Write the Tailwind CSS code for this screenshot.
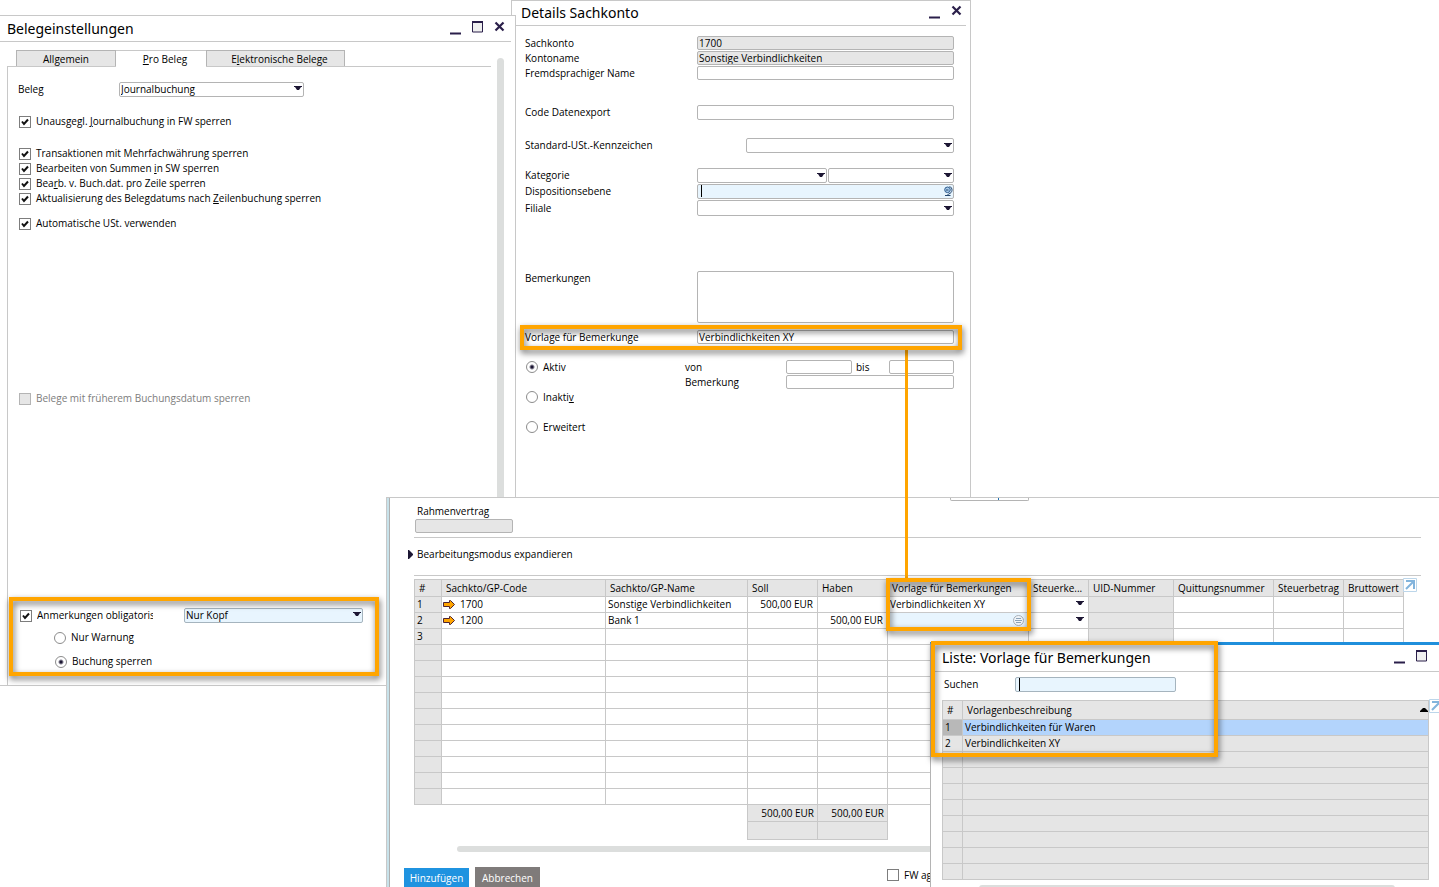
<!DOCTYPE html>
<html lang="de">
  <head>
    <meta charset="UTF-8" />
    <meta name="viewport" content="width=device-width, initial-scale=1.0" />
    <title>Belegeinstellungen</title>
    <script src="https://cdn.jsdelivr.net/npm/@tailwindcss/browser@4"></script>
  </head>
  <body class="relative h-screen min-h-[887px] overflow-hidden bg-white font-['Open_Sans',sans-serif] text-[10px] leading-[14px] text-black">
    <!-- Shared icons -->
    <svg class="hidden">
      <symbol id="i-down" viewBox="0 0 8 4"><path d="M0 0h8v1H7L5 4H3L1 1H0z" fill="#1c1633" /></symbol>
      <symbol id="i-check" viewBox="0 0 12 12"><path d="M3 5.500L5 8 9 3.500" fill="none" stroke="#111" stroke-width="2" /></symbol>
      <symbol id="i-min" viewBox="0 0 12 12"><path d="M0 10.500h11" stroke="#2a1f4a" stroke-width="2" /></symbol>
      <symbol id="i-max" viewBox="0 0 12 12"><path d="M.5 1h10v10H.5z" fill="#f0f0f0" stroke="#2a1f4a" /><path d="M0 1h11" stroke="#2a1f4a" stroke-width="2" /></symbol>
      <symbol id="i-close" viewBox="0 0 12 12"><path d="M1.500 1.500l8 8M9.500 1.500l-8 8" stroke="#2a1f4a" stroke-width="2.200" /></symbol>
      <symbol id="i-arrow" viewBox="0 0 12 9"><path d="M.5 2.500h6v-2h1l4 4-4 4h-1v-2h-6z" fill="#ffa500" stroke="#4a2436" /></symbol>
      <symbol id="i-expand" viewBox="0 0 14 14"><path d="M.5.5h13v13H.5z" fill="#fff" stroke="#bcd6ea" /><path d="M3 3h8v8M11 3l-8 8" fill="none" stroke="#82b4dc" stroke-width="2" /></symbol>
    </svg>

    <!-- Details Sachkonto -->
    <section class="absolute top-0 left-[511px] h-[498px] w-[460px] border border-[#c8c8c8] bg-white">
      <header class="mr-1 flex h-[25px] items-center border-b border-[#c8c8c8] pl-[9px]">
        <h2 class="flex-1 font-['Noto_Sans'] text-[14px] leading-[20px]">Details Sachkonto</h2>
        <button class="mr-[10px]" aria-label="Minimieren"><svg class="size-3"><use href="#i-min" /></svg></button>
        <button class="mr-[3px] mb-1" aria-label="Schließen"><svg class="size-3"><use href="#i-close" /></svg></button>
      </header>
      <form class="flex flex-col pt-[10px] pr-4 pl-[13px]">
        <div class="mb-px flex"><label for="konto" class="w-[172px]">Sachkonto</label><input id="konto" value="1700" readonly class="h-[14px] min-w-0 flex-1 rounded-[2px] border border-[#b4b4b4] bg-[#e6e6e6] px-px" /></div>
        <div class="mb-px flex"><label for="kname" class="w-[172px]">Kontoname</label><input id="kname" value="Sonstige Verbindlichkeiten" readonly class="h-[14px] min-w-0 flex-1 rounded-[2px] border border-[#b4b4b4] bg-[#e6e6e6] px-px" /></div>
        <div class="mb-[25px] flex"><label for="fname" class="w-[172px]">Fremdsprachiger Name</label><input id="fname" class="h-[14px] min-w-0 flex-1 rounded-[2px] border border-[#b4b4b4] px-px" /></div>
        <div class="mb-[18px] flex"><label for="code" class="w-[172px]">Code Datenexport</label><input id="code" class="h-[15px] min-w-0 flex-1 rounded-[2px] border border-[#b4b4b4] px-px" /></div>
        <div class="mb-[15px] flex"><label for="ust" class="w-[221px]">Standard-USt.-Kennzeichen</label>
          <span class="relative flex flex-1"><select id="ust" class="h-[15px] w-full appearance-none rounded-[2px] border border-[#b4b4b4]"><option></option></select><svg class="pointer-events-none absolute top-[5px] right-[2px] h-1 w-2"><use href="#i-down" /></svg></span>
        </div>
        <div class="mb-px flex"><label for="kat" class="w-[172px]">Kategorie</label>
          <span class="relative mr-px flex w-[130px]"><select id="kat" class="h-[15px] w-full appearance-none rounded-[2px] border border-[#b4b4b4]"><option></option></select><svg class="pointer-events-none absolute top-[5px] right-[2px] h-1 w-2"><use href="#i-down" /></svg></span>
          <span class="relative flex flex-1"><select aria-label="Unterkategorie" class="h-[15px] w-full appearance-none rounded-[2px] border border-[#b4b4b4]"><option></option></select><svg class="pointer-events-none absolute top-[5px] right-[2px] h-1 w-2"><use href="#i-down" /></svg></span>
        </div>
        <div class="mb-px flex"><label for="dispo" class="w-[172px]">Dispositionsebene</label>
          <span class="relative flex flex-1"><input id="dispo" class="h-[15px] w-full rounded-[2px] border border-[#b4b4b4] bg-[#e8f5fe]" /><span class="absolute top-px left-1 h-3 w-px bg-black"></span>
            <svg class="absolute top-[2px] right-px size-[10px]" viewBox="0 0 10 10" fill="none"><circle cx="4.500" cy="3.800" r="2.800" fill="#a9cbea" stroke="#2d5a8c" /><path d="M6.500.5c3.500 1 3.500 6.500-1 7.500M5 8v1.500M2 9.500h5.500M3 4h2.500" stroke="#24466f" /></svg></span>
        </div>
        <div class="mb-[55px] flex"><label for="filiale" class="w-[172px] pt-px">Filiale</label>
          <span class="relative flex flex-1"><select id="filiale" class="h-4 w-full appearance-none rounded-[2px] border border-[#b4b4b4]"><option></option></select><svg class="pointer-events-none absolute top-[6px] right-[2px] h-1 w-2"><use href="#i-down" /></svg></span>
        </div>
        <div class="mb-[7px] flex"><label for="bem" class="w-[172px]">Bemerkungen</label><textarea id="bem" class="h-[52px] min-w-0 flex-1 resize-none rounded-[2px] border border-[#b4b4b4]"></textarea></div>
        <div class="mb-4 flex"><label for="vorl" class="w-[172px]">Vorlage für Bemerkunge</label><input id="vorl" value="Verbindlichkeiten XY" class="h-[14px] min-w-0 flex-1 rounded-[2px] border border-[#b4b4b4] px-px" /></div>
        <div class="flex">
          <div class="flex w-40 shrink-0 flex-col gap-4">
            <label class="flex items-center gap-1"><input type="radio" name="status" checked class="mx-px size-3 appearance-none rounded-full border border-[#8c8c8c] checked:bg-[radial-gradient(circle,#1c1633_1px,transparent_3px)]" />Aktiv</label>
            <label class="flex items-center gap-1"><input type="radio" name="status" class="mx-px size-3 appearance-none rounded-full border border-[#8c8c8c]" /><span>Inakti<u>v</u></span></label>
            <label class="flex items-center gap-1"><input type="radio" name="status" class="mx-px size-3 appearance-none rounded-full border border-[#8c8c8c]" />Erweitert</label>
          </div>
          <div class="flex min-w-0 flex-1 flex-col gap-px">
            <div class="flex"><label for="von" class="w-[101px] shrink-0">von</label><input id="von" class="h-[14px] w-[66px] rounded-[2px] border border-[#b4b4b4]" /><label for="bis" class="w-[37px] shrink-0 pl-1">bis</label><input id="bis" class="h-[14px] min-w-0 flex-1 rounded-[2px] border border-[#b4b4b4]" /></div>
            <div class="flex"><label for="bemk" class="w-[101px] shrink-0">Bemerkung</label><input id="bemk" class="h-[14px] min-w-0 flex-1 rounded-[2px] border border-[#b4b4b4]" /></div>
          </div>
        </div>
      </form>
    </section>

    <!-- Belegeinstellungen -->
    <section class="absolute top-[15px] left-0 flex h-[671px] w-[516px] flex-col border-y border-r border-[#c8c8c8] bg-white">
      <header class="mr-1 flex h-[26px] shrink-0 items-center border-b border-[#c8c8c8] pl-[7px]">
        <h2 class="flex-1 font-['Noto_Sans'] text-[14px] leading-[20px]">Belegeinstellungen</h2>
        <button class="mr-[10px]" aria-label="Minimieren"><svg class="size-3"><use href="#i-min" /></svg></button>
        <button class="mr-[10px] mb-1" aria-label="Maximieren"><svg class="size-3"><use href="#i-max" /></svg></button>
        <button class="mr-[5px] mb-1" aria-label="Schließen"><svg class="size-3"><use href="#i-close" /></svg></button>
      </header>
      <div class="flex flex-1 pt-2">
        <div class="flex w-[491px] flex-col">
          <nav class="flex h-4 pl-4">
            <button class="w-[100px] border border-b-0 border-[#b4b4b4] bg-[#e6e6e6]">All<u>g</u>emein</button>
            <button class="w-[90px] border-t border-[#c8c8c8] pl-2"><u>P</u>ro Beleg</button>
            <button class="w-[139px] border border-b-0 border-[#b4b4b4] bg-[#e6e6e6] pl-2">E<u>l</u>ektronische Belege</button>
          </nav>
          <div class="ml-[7px] flex">
            <span class="h-px w-[109px] bg-[#c8c8c8]"></span><span class="h-px w-[90px]"></span><span class="h-px flex-1 bg-[#c8c8c8]"></span>
          </div>
          <form class="ml-[7px] flex flex-1 flex-col border-l border-[#c8c8c8] pt-[15px] pl-[10px] leading-[15px]">
            <div class="mb-[17px] flex"><label for="beleg" class="w-[101px]">Beleg</label>
              <span class="relative flex w-[185px]"><select id="beleg" class="h-[15px] w-full appearance-none rounded-[2px] border border-[#b4b4b4] px-px leading-[13px]"><option>Journalbuchung</option></select><svg class="pointer-events-none absolute top-1 right-[2px] h-1 w-2"><use href="#i-down" /></svg></span>
            </div>
            <label class="mb-[17px] flex items-center gap-[5px]"><span class="relative ml-px flex"><input type="checkbox" checked class="size-3 appearance-none border border-[#7d7d7d]" /><svg class="absolute size-3"><use href="#i-check" /></svg></span><span>Unausgegl. <u>J</u>ournalbuchung in FW sperren</span></label>
            <label class="flex items-center gap-[5px]"><span class="relative ml-px flex"><input type="checkbox" checked class="size-3 appearance-none border border-[#7d7d7d]" /><svg class="absolute size-3"><use href="#i-check" /></svg></span><span>Transaktionen mit Mehrfachwährung sperren</span></label>
            <label class="flex items-center gap-[5px]"><span class="relative ml-px flex"><input type="checkbox" checked class="size-3 appearance-none border border-[#7d7d7d]" /><svg class="absolute size-3"><use href="#i-check" /></svg></span><span>Bearbeiten von Summen <u>i</u>n SW sperren</span></label>
            <label class="flex items-center gap-[5px]"><span class="relative ml-px flex"><input type="checkbox" checked class="size-3 appearance-none border border-[#7d7d7d]" /><svg class="absolute size-3"><use href="#i-check" /></svg></span><span>Bea<u>r</u>b. v. Buch.dat. pro Zeile sperren</span></label>
            <label class="mb-[10px] flex items-center gap-[5px]"><span class="relative ml-px flex"><input type="checkbox" checked class="size-3 appearance-none border border-[#7d7d7d]" /><svg class="absolute size-3"><use href="#i-check" /></svg></span><span>Aktualisierung des Belegdatums nach <u>Z</u>eilenbuchung sperren</span></label>
            <label class="mb-40 flex items-center gap-[5px]"><span class="relative ml-px flex"><input type="checkbox" checked class="size-3 appearance-none border border-[#7d7d7d]" /><svg class="absolute size-3"><use href="#i-check" /></svg></span><span>Automatische USt. verwenden</span></label>
            <label class="flex items-center gap-[5px] text-[#7d7d7d]"><span class="ml-px flex"><input type="checkbox" disabled class="size-3 appearance-none border border-[#b4b4b4] bg-[#e6e6e6]" /></span><span>Belege mit früherem Buchungsdatum sperren</span></label>
            <div class="mt-auto mb-[7px] flex">
              <label class="flex w-[135px] items-center gap-[5px]"><span class="relative ml-[2px] flex"><input type="checkbox" checked class="size-3 appearance-none border border-[#7d7d7d]" /><svg class="absolute size-3"><use href="#i-check" /></svg></span><span class="overflow-hidden whitespace-nowrap">Anmerkungen obligatorisch</span></label>
              <span class="relative ml-[31px] flex w-[179px]"><select aria-label="Anmerkungen obligatorisch für" class="h-[15px] w-full appearance-none rounded-[2px] border border-[#a5b4be] bg-[#e8f5fe] px-px leading-[13px]"><option>Nur Kopf</option></select><svg class="pointer-events-none absolute top-1 right-[2px] h-1 w-2"><use href="#i-down" /></svg></span>
            </div>
            <label class="mb-[9px] flex items-center gap-[5px] pl-9"><input type="radio" name="art" class="size-3 appearance-none rounded-full border border-[#8c8c8c]" />Nur Warnung</label>
            <label class="mb-4 flex items-center gap-[5px] pl-[37px]"><input type="radio" name="art" checked class="size-3 appearance-none rounded-full border border-[#8c8c8c] checked:bg-[radial-gradient(circle,#1c1633_1px,transparent_3px)]" />Buchung sperren</label>
          </form>
        </div>
        <div class="mt-2 ml-[6px] w-[7px] rounded-full bg-[#dcdedd]"></div>
      </div>
    </section>

    <!-- Journalbuchung -->
    <section class="absolute top-[497px] right-0 bottom-0 left-[386px] flex border-t border-l border-[#c8c8c8] bg-white">
      <div class="w-[3px] shrink-0 border-r border-[#b0b0b0] bg-[#c8e2ea]"></div>
      <div class="flex min-w-0 flex-1 flex-col">
        <div class="ml-[560px] h-[3px] w-[79px] rounded-b-[2px] border border-t-0 border-[#b4b4b4]"><div class="ml-[47px] h-[2px] w-px bg-[#1e6fb0]"></div></div>
        <div class="mr-[18px] ml-6 flex flex-col border-b border-[#c8c8c8] pt-[3px] pb-1">
          <label for="rahmen" class="mb-px pl-[3px]">Rahmenvertrag</label>
          <input id="rahmen" readonly class="ml-px h-[14px] w-[98px] rounded-[2px] border border-[#b4b4b4] bg-[#e6e6e6]" />
        </div>
        <button class="mt-[9px] flex items-center gap-1 self-start pl-[18px]"><svg class="h-[9px] w-[5px]" viewBox="0 0 5 9"><path d="M0 0h1l4 4v1L1 9H0z" fill="#1c1633" /></svg>Bearbeitungsmodus expandieren</button>
        <div class="mt-[14px] mr-[18px] ml-6 border-b border-[#c8c8c8]"></div>
        <div class="mt-[3px] ml-6 flex items-start">
          <table class="w-[990px] table-fixed border-collapse [&_tbody_td]:h-4 [&_tbody_td]:border [&_tbody_td]:border-[#c8c8c8] [&_tbody_td]:pr-1 [&_tbody_td]:pb-px [&_tbody_td]:pl-[2px] [&_tbody_td]:leading-[14px] [&_th]:h-[17px] [&_th]:border [&_th]:border-[#c8c8c8] [&_th]:bg-[#e5e5e5] [&_th]:px-1 [&_th]:pb-px [&_th]:text-left [&_th]:font-normal [&_th]:whitespace-nowrap">
            <colgroup>
              <col class="w-[27px]" /><col class="w-[164px]" /><col class="w-[142px]" /><col class="w-[70px]" /><col class="w-[70px]" /><col class="w-[141px]" /><col class="w-[60px]" /><col class="w-[85px]" /><col class="w-[100px]" /><col class="w-[70px]" /><col class="w-[60px]" />
            </colgroup>
            <thead>
              <tr><th>#</th><th>Sachkto/GP-Code</th><th>Sachkto/GP-Name</th><th>Soll</th><th>Haben</th><th>Vorlage für Bemerkungen</th><th>Steuerke...</th><th>UID-Nummer</th><th>Quittungsnummer</th><th>Steuerbetrag</th><th>Bruttowert</th></tr>
            </thead>
            <tbody id="rows">
              <tr>
                <td class="bg-[#e5e5e5]">1</td>
                <td><div class="-ml-px flex items-center gap-[5px]"><svg class="h-[9px] w-3"><use href="#i-arrow" /></svg>1700</div></td>
                <td>Sonstige Verbindlichkeiten</td><td class="text-right">500,00 EUR</td><td></td><td>Verbindlichkeiten XY</td>
                <td><svg class="mb-[3px] ml-auto h-1 w-2"><use href="#i-down" /></svg></td><td class="bg-[#e5e5e5]"></td><td></td><td></td><td></td>
              </tr>
              <tr>
                <td class="bg-[#e5e5e5]">2</td>
                <td><div class="-ml-px flex items-center gap-[5px]"><svg class="h-[9px] w-3"><use href="#i-arrow" /></svg>1200</div></td>
                <td>Bank 1</td><td></td><td class="text-right">500,00 EUR</td>
                <td class="bg-[#e8f5fe]"><svg class="ml-auto size-[11px]" viewBox="0 0 11 11" fill="none" stroke="#8ba3b8"><circle cx="5.500" cy="5.500" r="5" fill="#f0f4f8" stroke="#a8b0b8" /><path d="M3 3.500h5M2 5.500h7M3 7.500h5" /></svg></td>
                <td><svg class="mb-[3px] ml-auto h-1 w-2"><use href="#i-down" /></svg></td><td class="bg-[#e5e5e5]"></td><td></td><td></td><td></td>
              </tr>
              <tr><td class="bg-[#e5e5e5]">3</td><td></td><td></td><td></td><td></td><td></td><td></td><td class="bg-[#e5e5e5]"></td><td></td><td></td><td></td></tr>
            </tbody>
            <tfoot>
              <tr><td colspan="3"></td><td class="h-[17px] border border-[#c8c8c8] bg-[#e5e5e5] px-[3px] pb-px text-right">500,00 EUR</td><td class="h-[17px] border border-[#c8c8c8] bg-[#e5e5e5] px-[3px] pb-px text-right">500,00 EUR</td></tr>
              <tr><td colspan="3"></td><td class="h-[18px] border border-[#c8c8c8] bg-[#e5e5e5]"></td><td class="h-[18px] border border-[#c8c8c8] bg-[#e5e5e5]"></td></tr>
            </tfoot>
          </table>
          <button class="-mt-px -ml-px" aria-label="Tabelle vergrößern"><svg class="size-[14px]"><use href="#i-expand" /></svg></button>
        </div>
        <div class="mt-[6px] mr-[18px] ml-[67px] h-[6px] shrink-0 rounded-full bg-[#dcdedd]"></div>
        <footer class="mt-[15px] flex items-start pl-[14px]">
          <button class="mt-px h-5 w-[65px] bg-[#1f93e0] text-white">Hinzufügen</button>
          <button class="ml-[6px] h-[21px] w-[65px] bg-[#7f7b7a] text-white">Abbrechen</button>
          <label class="mt-px ml-[347px] flex items-center gap-[5px]"><input type="checkbox" class="size-3 appearance-none border border-[#7d7d7d]" />FW ag</label>
        </footer>
      </div>
    </section>

    <!-- Liste: Vorlage für Bemerkungen -->
    <section class="absolute top-[642px] right-0 bottom-0 left-[930px] flex flex-col overflow-hidden border-t-[3px] border-l border-t-[#1f8fdc] border-l-[#b4b4b4] bg-white">
      <header class="flex h-[27px] shrink-0 items-center border-b border-[#c8c8c8] pl-[11px]">
        <h2 class="flex-1 font-['Noto_Sans'] text-[14px] leading-[20px]">Liste: Vorlage für Bemerkungen</h2>
        <button class="mr-[10px]" aria-label="Minimieren"><svg class="size-3"><use href="#i-min" /></svg></button>
        <button class="mr-[11px] mb-1" aria-label="Maximieren"><svg class="size-3"><use href="#i-max" /></svg></button>
      </header>
      <div class="mt-[5px] flex shrink-0 pl-[13px]">
        <label for="suchen" class="w-[71px]">Suchen</label>
        <span class="relative flex"><input id="suchen" class="h-[15px] w-[161px] rounded-[2px] border border-[#a5b4be] bg-[#e8f5fe]" /><span class="absolute top-px left-1 h-[13px] w-px bg-black"></span></span>
      </div>
      <div class="mt-2 flex items-start pl-[11px]">
        <table class="min-w-0 flex-1 table-fixed border-collapse bg-[#e5e5e5] [&_td]:h-4 [&_td]:border [&_td]:border-[#c8c8c8] [&_td]:px-[2px] [&_td]:pb-px [&_td]:leading-[14px] [&_th]:h-[19px] [&_th]:border [&_th]:border-[#c8c8c8] [&_th]:px-1 [&_th]:pb-px [&_th]:text-left [&_th]:font-normal">
          <colgroup><col class="w-5" /><col /></colgroup>
          <thead>
            <tr><th>#</th><th><div class="flex items-center justify-between">Vorlagenbeschreibung<svg class="-mr-1 h-1 w-2" viewBox="0 0 8 4"><path d="M3 0h2l3 3v1H0V3z" /></svg></div></th></tr>
          </thead>
          <tbody id="templates">
            <tr class="bg-[#b3d4fc]"><td class="bg-[#b8b8b8]">1</td><td>Verbindlichkeiten für Waren</td></tr>
            <tr><td>2</td><td>Verbindlichkeiten XY</td></tr>
          </tbody>
        </table>
        <button class="-mt-px -mr-1 shrink-0" aria-label="Liste vergrößern"><svg class="size-[14px]"><use href="#i-expand" /></svg></button>
      </div>
      <div class="mt-[5px] mr-11 ml-12 h-[6px] shrink-0 rounded-full bg-[#dcdedd]"></div>
    </section>

    <!-- Highlights -->
    <div class="pointer-events-none absolute top-[350px] left-[905px] h-[228px] w-[3px] bg-[#ffa500]"></div>
    <div class="pointer-events-none absolute top-[597px] left-[9px] h-[79px] w-[370px] border-4 border-[#ffa500] drop-shadow-[1px_3px_3px_rgba(0,0,0,0.6)]"></div>
    <div class="pointer-events-none absolute top-[325px] left-[520px] h-[25px] w-[442px] border-4 border-[#ffa500] drop-shadow-[1px_3px_3px_rgba(0,0,0,0.6)]"></div>
    <div class="pointer-events-none absolute top-[578px] left-[886px] h-[53px] w-[145px] border-4 border-[#ffa500] drop-shadow-[1px_3px_3px_rgba(0,0,0,0.6)]"></div>
    <div class="pointer-events-none absolute top-[641px] left-[931px] h-[116px] w-[287px] border-4 border-[#ffa500] drop-shadow-[1px_3px_3px_rgba(0,0,0,0.6)]"></div>

    <script>
      // fill both grids up with empty rows
      const row = '<tr><td class="bg-[#e5e5e5]"></td><td></td><td></td><td></td><td></td><td></td><td></td><td class="bg-[#e5e5e5]"></td><td></td><td></td><td></td></tr>';
      document.getElementById('rows').insertAdjacentHTML('beforeend', row.repeat(10));
      document.getElementById('templates').insertAdjacentHTML('beforeend', '<tr><td></td><td></td></tr>'.repeat(8));
    </script>
  </body>
</html>
